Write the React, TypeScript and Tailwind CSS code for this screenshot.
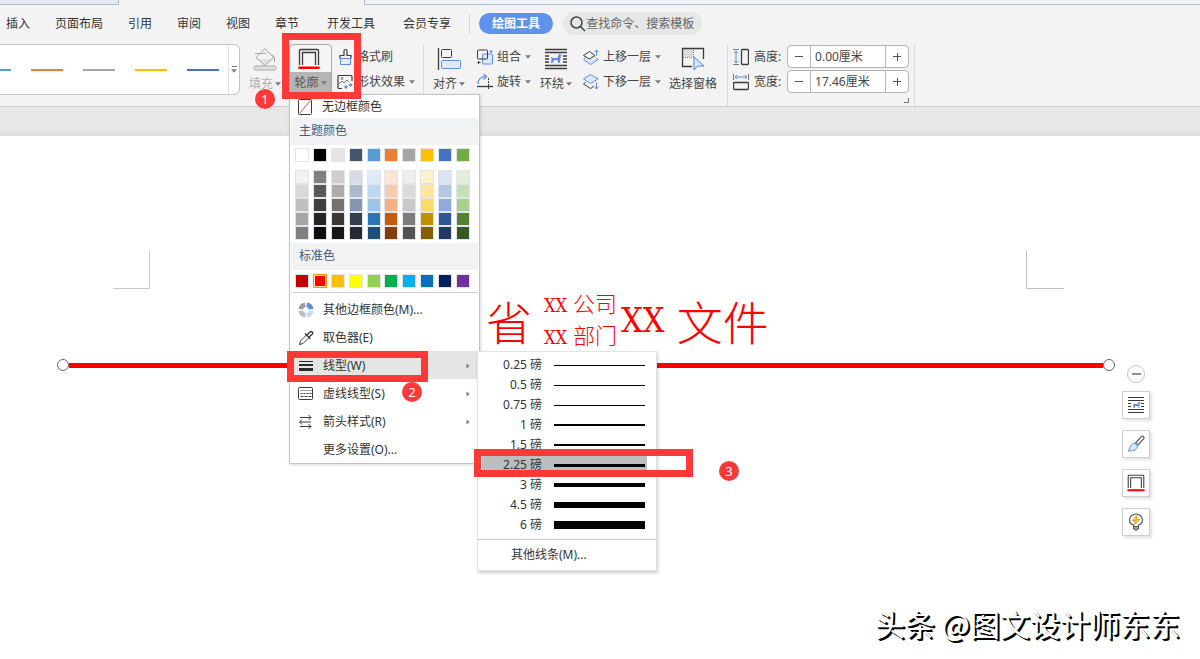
import React from 'react';

const tabs = ['插入', '页面布局', '引用', '审阅', '视图', '章节'];
const moreTabs = ['开发工具', '会员专享'];

const galleryColors = ['#5b9bd5', '#ed7d31', '#a5a5a5', '#ffc000', '#4472c4'];

const themeColors = ['#ffffff', '#000000', '#e7e6e6', '#44546a', '#5b9bd5', '#ed7d31', '#a5a5a5', '#ffc000', '#4472c4', '#70ad47'];

const themeTints = [
  ['#f2f2f2', '#d9d9d9', '#bfbfbf', '#a6a6a6', '#808080'],
  ['#808080', '#595959', '#404040', '#262626', '#0d0d0d'],
  ['#d0cece', '#afabab', '#767171', '#3b3838', '#181717'],
  ['#d6dce5', '#adb9ca', '#8497b0', '#333f50', '#222a35'],
  ['#deebf7', '#bdd7ee', '#9dc3e6', '#2e75b6', '#1f4e79'],
  ['#fbe5d6', '#f8cbad', '#f4b183', '#c55a11', '#843c0c'],
  ['#ededed', '#dbdbdb', '#c9c9c9', '#7c7c7c', '#525252'],
  ['#fff2cc', '#ffe699', '#ffd966', '#bf9000', '#806000'],
  ['#dae3f3', '#b4c7e7', '#8faadc', '#2f5597', '#203864'],
  ['#e2f0d9', '#c5e0b4', '#a9d18e', '#548235', '#385723'],
];

const standardColors = ['#c00000', '#ff0000', '#ffc000', '#ffff00', '#92d050', '#00b050', '#00b0f0', '#0070c0', '#002060', '#7030a0'];

const weights = [
  { label: '0.25 磅', size: 1 },
  { label: '0.5 磅', size: 1 },
  { label: '0.75 磅', size: 1 },
  { label: '1 磅', size: 2 },
  { label: '1.5 磅', size: 2 },
  { label: '2.25 磅', size: 3, active: true },
  { label: '3 磅', size: 4 },
  { label: '4.5 磅', size: 6 },
  { label: '6 磅', size: 8 },
];

function Caret() {
  return (
    <svg width="6" height="4" viewBox="0 0 6 4" className="shrink-0">
      <path d="M0 0.300h6L3 3.700z" fill="#7c7c7c" />
    </svg>
  );
}

function FillIcon() {
  return (
    <svg width="24" height="24" viewBox="0 0 24 24" fill="none" stroke="#a6a6a6">
      <path d="M4 12h16l-8 7z" fill="#e2e2e2" stroke="none" />
      <path d="M12 1.500L20.500 10.500L12 18.500L3 10.500z" />
      <path d="M2 6.500h11M19 8l2.500 2v5" />
      <rect x="1" y="19" width="22" height="4" rx="1.500" fill="#e2e2e2" />
    </svg>
  );
}

function OutlineIcon({ size }: { size: number }) {
  return (
    <svg width={size} height={size} viewBox="0 0 22 22" fill="none">
      <path d="M1.500 17V2.500a1 1 0 0 1 1-1H19.500a1 1 0 0 1 1 1V17" stroke="#3b3b3b" strokeWidth="1.300" />
      <path d="M4.500 17V4.500H17.500V17" stroke="#3b3b3b" strokeWidth="1.300" />
      <path d="M1.500 19.800H20.500" stroke="#ff0000" strokeWidth="2.600" strokeLinecap="round" />
    </svg>
  );
}

function FormatIcon() {
  return (
    <svg width="16" height="18" viewBox="0 0 16 18" fill="none">
      <path d="M3.500 10.500h10v6h-10z" fill="#e4ecfa" stroke="#5b8de0" />
      <path d="M3 10.500V7.500h4V3a1.500 1.500 0 0 1 3 0v4.500h4v3" stroke="#3b3b3b" strokeWidth="1.200" />
    </svg>
  );
}

function EffectIcon() {
  return (
    <svg width="16" height="16" viewBox="0 0 16 16" fill="none">
      <path d="M5 14.500H2a1 1 0 0 1-1-1V2.500a1 1 0 0 1 1-1h12a1 1 0 0 1 1 1V7" stroke="#3b3b3b" strokeWidth="1.200" />
      <path d="M2 10l3-3 2 2 3-3 2 2" stroke="#777" />
      <circle cx="5" cy="4.500" r="1" stroke="#777" />
      <path d="M9 11l2 2-2 2-2-2zM13.500 9l2 2-2 2-2-2z" fill="#5b8de0" />
    </svg>
  );
}

function AlignIcon() {
  return (
    <svg width="24" height="24" viewBox="0 0 24 24" fill="none">
      <path d="M1.500 1v22" stroke="#3b3b3b" strokeWidth="1.300" />
      <rect x="4.500" y="2.500" width="10" height="8" rx="1" stroke="#3b3b3b" />
      <rect x="4.500" y="13.500" width="19" height="8" rx="1" fill="#dfe9fa" stroke="#5b8de0" />
    </svg>
  );
}

function GroupIcon() {
  return (
    <svg width="16" height="16" viewBox="0 0 16 16" fill="none">
      <rect x="5.500" y="5" width="10" height="10" rx="1" fill="#dfe9fa" stroke="#5b8de0" />
      <rect x="0.500" y="1" width="10" height="9" rx="1" stroke="#3b3b3b" />
      <path d="M1.500 12v3M0.500 13.500h3" stroke="#3b3b3b" />
      <path d="M14 1v3M12.500 2.500h3" stroke="#5b8de0" />
    </svg>
  );
}

function RotateIcon() {
  return (
    <svg width="16" height="16" viewBox="0 0 16 16" fill="none">
      <path d="M1 10C1 5 4 2.500 9 2.500M6.500 0L9.500 2.500L6.500 5.500" stroke="#5b8de0" strokeWidth="1.200" />
      <path d="M0 12.500h16" stroke="#3b3b3b" strokeWidth="1.300" />
      <path d="M11.500 4v12" stroke="#3b3b3b" strokeDasharray="2 1" />
    </svg>
  );
}

function WrapIcon({ size }: { size: number }) {
  return (
    <svg width={size} height={size} viewBox="0 0 24 24" fill="none">
      <path d="M1 2.500h22M1 5.500h22M1 9h4M19 9h4M1 12h4M19 12h4M1 15h4M19 15h4M1 18.500h22M1 21.500h22" stroke="#3b3b3b" strokeWidth="1.400" />
      <path d="M7 10l1.500 1h5L15 7l3 1-1.500 1.500V12l-1 4h-1.500l-.5-3h-3L8.500 16H7l.5-3.500z" fill="#5b8de0" />
    </svg>
  );
}

function LayerIcon({ down }: { down?: boolean }) {
  return (
    <svg width="16" height="16" viewBox="0 0 16 16" fill="none">
      {down ? (
        <>
          <path d="M7.500 0.500L15 5L7.500 9.500L0.500 5z" fill="#dfe9fa" stroke="#5b8de0" />
          <path d="M2.500 8L0.500 10L7.500 14.500L11 12" stroke="#3b3b3b" />
          <path d="M13.500 8.500v6.500M11.500 13l2 2 2-2" stroke="#5b8de0" />
        </>
      ) : (
        <>
          <path d="M2.500 8.500L0.500 10.500L7.500 15.500L15 10.500L13 8.500" fill="#dfe9fa" stroke="#5b8de0" />
          <path d="M6.500 2.500L12 6.500L6.500 10L0.500 6.500z" fill="#f3f3f3" stroke="#3b3b3b" />
          <path d="M13.500 7V1M11.500 3l2-2 2 2" stroke="#5b8de0" />
        </>
      )}
    </svg>
  );
}

function SelectPaneIcon() {
  return (
    <svg width="24" height="24" viewBox="0 0 24 24" fill="none">
      <path d="M2 2h10v8H2z" fill="#dcdcdc" />
      <path d="M11 19.500H1.500v-18h21V12" stroke="#3b3b3b" strokeWidth="1.300" />
      <path d="M12.500 3v7M2 10.500h10" stroke="#777" strokeDasharray="1 1" />
      <path d="M13 10v13l3.500-4H23z" fill="#dfe9fa" stroke="#4a83e0" />
    </svg>
  );
}

function HeightIcon() {
  return (
    <svg width="16" height="18" viewBox="0 0 16 18" fill="none">
      <path d="M0 1.500h6M0 16.500h6" stroke="#777" />
      <path d="M3 3v12M1 5l2-2 2 2M1 13l2 2 2-2" stroke="#5b8de0" />
      <rect x="8.500" y="1.500" width="7" height="15" rx="1" stroke="#3b3b3b" strokeWidth="1.300" />
    </svg>
  );
}

function WidthIcon() {
  return (
    <svg width="16" height="18" viewBox="0 0 16 18" fill="none">
      <path d="M0.500 1v6M15.500 1v6" stroke="#777" />
      <path d="M2 4h12M4 2L2 4l2 2M12 2l2 2-2 2" stroke="#5b8de0" />
      <rect x="0.500" y="9.500" width="15" height="7" rx="1" stroke="#3b3b3b" strokeWidth="1.300" />
    </svg>
  );
}

function BigButton({ icon, label, caret = true, className = '' }: { icon: React.ReactNode; label: string; caret?: boolean; className?: string }) {
  return (
    <button className={`flex shrink-0 flex-col items-center ${className}`}>
      <span className="flex h-[29px] items-center justify-center">{icon}</span>
      <span className="flex h-[22px] items-center gap-[2px] whitespace-nowrap">
        {label}
        {caret && <Caret />}
      </span>
    </button>
  );
}

function SmallButton({ icon, label, caret = true }: { icon: React.ReactNode; label: string; caret?: boolean }) {
  return (
    <button className="flex h-[25px] items-center gap-1 whitespace-nowrap">
      {icon}
      <span>{label}</span>
      {caret && <Caret />}
    </button>
  );
}

function Divider() {
  return <span className="h-[62px] w-px shrink-0 bg-[#dcdcdc]" />;
}

function Spinner({ id, label, value, icon }: { id: string; label: string; value: string; icon: React.ReactNode }) {
  return (
    <div className="flex h-[25px] items-center gap-[5px]">
      {icon}
      <label htmlFor={id} className="w-7 whitespace-nowrap">{label}</label>
      <div className="flex h-[23px] w-[122px] overflow-hidden rounded border border-[#b5b5b5] bg-white">
        <button aria-label="减少" className="flex w-[22px] items-center justify-center">
          <span className="h-px w-2 bg-[#555]" />
        </button>
        <input id={id} defaultValue={value} className="w-0 min-w-0 flex-1 border-x border-[#b5b5b5] px-1 text-[#444] outline-none" />
        <button aria-label="增加" className="relative flex w-[22px] items-center justify-center">
          <span className="h-px w-2 bg-[#555]" />
          <span className="absolute h-2 w-px bg-[#555]" />
        </button>
      </div>
    </div>
  );
}

function Swatch({ color, active }: { color: string; active?: boolean }) {
  return (
    <button
      aria-label={color}
      className={`block h-[14px] w-[14px] border ${active ? 'border-[#ff9900] ring-1 ring-inset ring-[#ffe0a0]' : 'border-[#e2e4e7]'}`}
      style={{ backgroundColor: color }}
    />
  );
}

function MenuItem({ icon, label, arrow, active }: { icon?: React.ReactNode; label: string; arrow?: boolean; active?: boolean }) {
  return (
    <button className={`flex h-7 w-full items-center pt-px pr-[9px] pl-2 ${active ? 'bg-[#e5e5e5]' : ''}`}>
      <span className="flex w-[25px] shrink-0">{icon}</span>
      <span className="flex-1 text-left">{label}</span>
      {arrow && (
        <svg width="4" height="6" viewBox="0 0 4 6">
          <path d="M0.500 0.500L3.500 3L0.500 5.500z" fill="#777" />
        </svg>
      )}
    </button>
  );
}

function WeightMenu() {
  return (
    <div className="absolute top-[256px] left-[187px] w-[180px] border border-[#e2e2e2] bg-white pt-[3px] shadow-[1px_2px_3px_rgba(0,0,0,0.2)]">
      {weights.map((w) => (
        <button key={w.label} className={`ml-1 flex h-5 w-[165px] items-center ${w.active ? 'bg-[#bdbdbd]' : ''}`}>
          <span className="w-[60px] text-right">{w.label}</span>
          <span className="ml-3 w-[91px] bg-black" style={{ height: w.size }} />
        </button>
      ))}
      <div className="mt-1 h-px bg-[#c8c8c8]" />
      <button className="h-[30px] w-full pl-[33px] text-left">其他线条(M)...</button>
    </div>
  );
}

function OutlineMenu() {
  return (
    <div className="absolute top-[50px] left-0 z-20 w-[191px] border border-[#c3c3c3] bg-white text-[#333] shadow-[1px_1px_3px_rgba(0,0,0,0.15)]">
      <button className="flex h-[23px] w-full items-center gap-[9px] pl-2">
        <svg width="15" height="16" viewBox="0 0 15 16" fill="none">
          <rect x="0.500" y="0.500" width="13" height="15" rx="1" stroke="#3b3b3b" />
          <path d="M1.500 14.500L12.500 1.500" stroke="#d94a4a" />
        </svg>
        无边框颜色
      </button>
      <div className="mx-px flex h-[27px] items-center bg-[#f0f2f4] pb-[2px] pl-2 text-[#44597c]">主题颜色</div>
      <div className="flex justify-between pt-[3px] pr-[9px] pl-[5px]">
        {themeColors.map((c) => (
          <Swatch key={c} color={c} />
        ))}
      </div>
      <div className="flex justify-between pt-2 pr-[9px] pb-[3px] pl-[5px]">
        {themeTints.map((col, i) => (
          <div key={i}>
            {col.map((c) => (
              <Swatch key={c} color={c} />
            ))}
          </div>
        ))}
      </div>
      <div className="mx-px flex h-[27px] items-center bg-[#f0f2f4] pb-[2px] pl-2 text-[#44597c]">标准色</div>
      <div className="flex justify-between pt-1 pr-[9px] pb-1 pl-[5px]">
        {standardColors.map((c) => (
          <Swatch key={c} color={c} active={c === '#ff0000'} />
        ))}
      </div>
      <div className="mx-px mb-[2px] h-px bg-[#d0d0d0]" />
      <MenuItem
        label="其他边框颜色(M)..."
        icon={
          <svg width="16" height="16" viewBox="0 0 16 16" fill="none" strokeWidth="4.500">
            <path d="M8.700 2.800A5.300 5.300 0 0 1 13.200 7.300" stroke="#5b8de0" />
            <path d="M13.200 8.700A5.300 5.300 0 0 1 8.700 13.200" stroke="#c4d8f8" />
            <path d="M7.300 13.200A5.300 5.300 0 0 1 2.800 8.700" stroke="#b8bcc2" />
            <path d="M2.800 7.300A5.300 5.300 0 0 1 7.300 2.800" stroke="#9a9da3" />
          </svg>
        }
      />
      <MenuItem
        label="取色器(E)"
        icon={
          <svg width="16" height="16" viewBox="0 0 16 16" fill="none" stroke="#3b3b3b">
            <path d="M8.500 5L2.500 11L1.500 14.500L5 13.500L11 7.500" />
            <path d="M7 3.500L12.500 9M9 5L12 2a1.500 1.500 0 0 1 2.200 2.200L11 7" strokeWidth="1.400" />
          </svg>
        }
      />
      <MenuItem
        label="线型(W)"
        arrow
        active
        icon={
          <svg width="16" height="14" viewBox="0 0 16 14" stroke="#2b2b2b">
            <path d="M1 2.500h14" />
            <path d="M1 6h14" strokeWidth="2" />
            <path d="M1 10.500h14" strokeWidth="3" />
          </svg>
        }
      />
      <MenuItem
        label="虚线线型(S)"
        arrow
        icon={
          <svg width="16" height="14" viewBox="0 0 16 14" fill="none" stroke="#3b3b3b">
            <rect x="0.500" y="0.500" width="14" height="12" rx="1" />
            <path d="M2.500 3.500h11" strokeDasharray="1 1" />
            <path d="M2.500 6.500h11" strokeDasharray="2 1" />
            <path d="M2.500 9.500h11" strokeDasharray="3 1" />
          </svg>
        }
      />
      <MenuItem
        label="箭头样式(R)"
        arrow
        icon={
          <svg width="16" height="16" viewBox="0 0 16 16" fill="none" stroke="#3b3b3b">
            <path d="M2 3.500h11M10.500 1l2.500 2.500L10.500 6M2 8h11M4 5.500L1.500 8L4 10.500M2 12.500h11M10.500 10l2.500 2.500-2.500 2.500" />
          </svg>
        }
      />
      <MenuItem label="更多设置(O)..." />
      <WeightMenu />
    </div>
  );
}

function Ribbon() {
  return (
    <div className="flex h-[65px] border-b border-[#cfcfcf] pt-[2px] text-[#444]">
      <div className="flex h-[51px] w-[240px] shrink-0 items-center rounded-r-md border border-l-0 border-[#c4c4c4] bg-white">
        <div className="flex w-[228px] gap-5 overflow-hidden pr-[11px]">
          {galleryColors.map((c, i) => (
            <button key={c} aria-label={c} className={`flex h-10 shrink-0 items-center ${i === 0 ? 'w-[11px]' : 'w-8'}`}>
              <span className="h-[2px] w-full" style={{ backgroundColor: c }} />
            </button>
          ))}
        </div>
        <button aria-label="更多样式" className="flex h-full flex-1 flex-col items-center justify-center gap-[2px] border-l border-[#e0e0e0]">
          <span className="h-px w-[5px] bg-[#777]" />
          <Caret />
        </button>
      </div>
      <BigButton icon={<FillIcon />} label="填充" className="ml-[9px] w-8 text-[#b0b0b0]" />
      <div className="relative ml-2 shrink-0">
        <button className="flex w-[43px] flex-col overflow-hidden rounded-t border border-[#a9a9a9] bg-[#f5f5f5]">
          <span className="flex h-[27px] items-center justify-center pr-[3px]">
            <OutlineIcon size={22} />
          </span>
          <span className="flex h-[22px] items-center justify-center gap-[2px] bg-[#b5b5b5] text-[#555]">
            轮廓
            <Caret />
          </span>
        </button>
        <OutlineMenu />
      </div>
      <div className="ml-[5px] flex flex-col">
        <SmallButton icon={<FormatIcon />} label="格式刷" caret={false} />
        <SmallButton icon={<EffectIcon />} label="形状效果" />
      </div>
      <span className="ml-2 flex">
        <Divider />
      </span>
      <BigButton icon={<AlignIcon />} label="对齐" className="ml-[9px] w-8" />
      <div className="ml-3 flex flex-col">
        <SmallButton icon={<GroupIcon />} label="组合" />
        <SmallButton icon={<RotateIcon />} label="旋转" />
      </div>
      <BigButton icon={<WrapIcon size={24} />} label="环绕" className="ml-[9px] w-8" />
      <div className="ml-[11px] flex flex-col">
        <SmallButton icon={<LayerIcon />} label="上移一层" />
        <SmallButton icon={<LayerIcon down />} label="下移一层" />
      </div>
      <BigButton icon={<SelectPaneIcon />} label="选择窗格" caret={false} className="ml-2 w-12" />
      <span className="ml-[10px] flex">
        <Divider />
      </span>
      <div className="ml-[5px] flex flex-col">
        <Spinner id="shape-height" label="高度:" value="0.00厘米" icon={<HeightIcon />} />
        <Spinner id="shape-width" label="宽度:" value="17.46厘米" icon={<WidthIcon />} />
        <span className="mt-1 h-[5px] w-[5px] self-end border-r border-b border-[#777]" />
      </div>
      <span className="ml-[5px] flex">
        <Divider />
      </span>
    </div>
  );
}

function SideTools() {
  const box = 'flex h-7 w-7 items-center justify-center border border-[#cfcfcf] bg-white shadow-[2px_2px_3px_rgba(0,0,0,0.12)]';
  return (
    <div className="absolute top-[229px] right-[50px] flex flex-col items-center gap-[11px]">
      <button aria-label="收起" className="-mb-[3px] flex h-[18px] w-[18px] items-center justify-center rounded-full border border-[#c4c4c4] bg-white">
        <span className="h-[2px] w-[9px] bg-[#909090]" />
      </button>
      <button aria-label="环绕" className={box}>
        <svg width="16" height="16" viewBox="0 0 16 16" fill="none">
          <path d="M0 0.500h16M0 3.500h16M0 6.500h3M13 6.500h3M0 9.500h3M13 9.500h3M0 12.500h16M0 15.500h16" stroke="#3b3b3b" />
          <path d="M5 7h4.500L11 5l2 .5L11.500 7v4h-1V9H7v2H5.500V8.500z" fill="#5b8de0" />
        </svg>
      </button>
      <button aria-label="样式" className={box}>
        <svg width="18" height="18" viewBox="0 0 18 18" fill="none">
          <path d="M8.500 8L14.300 1.600a1.600 1.600 0 0 1 2.300 2.200L11 10z" fill="#fff" stroke="#555" strokeWidth="1.200" />
          <path d="M7.500 8l3 3c-1 3-2 5-9.500 5 2-2 2.500-7 6.500-8z" fill="#dfe9fa" stroke="#5b8de0" />
          <path d="M8.500 7l3 3.500" stroke="#5b8de0" />
        </svg>
      </button>
      <button aria-label="轮廓" className={box}>
        <OutlineIcon size={18} />
      </button>
      <button aria-label="灵感" className={box}>
        <svg width="16" height="18" viewBox="0 0 16 18" fill="none">
          <path d="M5.500 13.500v-1.500C3.500 11.500 1.500 9.500 1.500 7a6.500 6 0 0 1 13 0c0 2.500-2 4.500-4 5v1.500z" stroke="#555" strokeWidth="1.200" />
          <path d="M5.500 13.500h5v2.500h-1.500v1h-2v-1H5.500z" fill="#aaa" stroke="#555" />
          <path d="M9 2.500L4 7.500h3L6.500 11.500L12 6.500H9z" fill="#ffc928" stroke="#e8892c" strokeWidth="0.800" />
        </svg>
      </button>
    </div>
  );
}

function Page() {
  return (
    <main className="relative flex-1 bg-white pt-[115px]">
      <div className="flex h-[38px] justify-between pr-[136px] pl-[113px]">
        <span className="w-[37px] border-r border-b border-[#c8c8c8]" />
        <span className="w-[38px] border-b border-l border-[#c0c0c0]" />
      </div>
      <h1 className="mt-[6px] flex h-[50px] items-center pl-[486px] font-['Noto_Sans_CJK_SC',sans-serif] font-light whitespace-nowrap text-[#ff0000]">
        <span className="text-[46px] leading-[50px]">省</span>
        <span className="ml-3 flex flex-col text-[22px] leading-[29px]">
          <span className="flex items-baseline gap-[6px]">
            <span className="font-['DejaVu_Serif_Condensed','Liberation_Serif',serif] text-[18px]">XX</span>公司
          </span>
          <span className="flex items-baseline gap-[6px]">
            <span className="font-['DejaVu_Serif_Condensed','Liberation_Serif',serif] text-[18px]">XX</span>部门
          </span>
        </span>
        <span className="ml-1 font-['DejaVu_Serif_Condensed','Liberation_Serif',serif] text-[34px] leading-[50px]">XX</span>
        <span className="ml-3 text-[46px] leading-[50px]">文件</span>
      </h1>
      <div className="mt-[14px] mr-[85px] ml-[57px] flex items-center">
        <span className="h-3 w-3 rounded-full border border-[#666] bg-white" />
        <span className="h-[5px] flex-1 bg-[#ff0000]" />
        <span className="h-3 w-3 rounded-full border border-[#666] bg-white" />
      </div>
      <SideTools />
      <p className="absolute right-[20px] bottom-[13px] font-['Noto_Sans_CJK_SC',sans-serif] text-[30px] leading-[46px] whitespace-nowrap text-white [text-shadow:1px_1px_0_#000,2px_2px_0_#000]">头条 @图文设计师东东</p>
    </main>
  );
}

function Step({ n, className }: { n: number; className: string }) {
  return (
    <span className={`absolute z-30 flex h-5 w-5 items-center justify-center rounded-full bg-[#ff3838] text-[13px] text-white ${className}`}>{n}</span>
  );
}

export default function App() {
  return (
    <div className="relative flex min-h-screen flex-col overflow-hidden bg-[#f3f3f3] font-['Noto_Sans','Noto_Sans_CJK_SC',sans-serif] text-[12px] leading-[18px]">
      <div className="flex h-[5px] justify-between">
        <span className="w-[119px] border-r border-b border-[#b4bed0] bg-[#e4e8f2]" />
        <span className="ml-[245px] flex-1 border-b border-l border-[#b4bed0] bg-[#eff2f8]" />
      </div>
      <nav className="flex h-[37px] items-center pl-[6px] text-[#333]">
        <div className="flex gap-[25px] whitespace-nowrap">
          {tabs.map((t) => (
            <button key={t}>{t}</button>
          ))}
        </div>
        <div className="ml-7 flex gap-7 whitespace-nowrap">
          {moreTabs.map((t) => (
            <button key={t}>{t}</button>
          ))}
        </div>
        <span className="ml-[18px] h-5 w-px bg-[#d5d5d5]" />
        <button className="ml-[9px] h-[21px] w-[74px] rounded-full bg-[#5f92ea] font-bold text-white">绘图工具</button>
        <label htmlFor="search" className="ml-[10px] flex h-[23px] w-[139px] items-center rounded-full bg-[#e5e7e9] pl-[7px]">
          <svg width="16" height="16" viewBox="0 0 16 16" fill="none" stroke="#444" strokeWidth="1.500">
            <circle cx="6.500" cy="6.500" r="5.500" />
            <path d="M10.500 10.500L15 15" />
          </svg>
          <input id="search" aria-label="查找命令" placeholder="查找命令、搜索模板" className="w-0 min-w-0 flex-1 bg-transparent outline-none placeholder:text-[#666]" />
        </label>
      </nav>
      <Ribbon />
      <div className="h-[29px] bg-gradient-to-b from-[#e7e7e7] from-80% to-[#dcdcdc]" />
      <Page />

      <span className="absolute top-[33px] left-[282px] z-30 h-[66px] w-[79px] border-[7px] border-[#ff3838]" />
      <span className="absolute top-[351px] left-[287px] z-30 h-[31px] w-[141px] border-[7px] border-[#ff3838]" />
      <span className="absolute top-[449px] left-[474px] z-30 h-[28px] w-[219px] border-[7px] border-[#ff3838]" />
      <Step n={1} className="top-[89px] left-[255px]" />
      <Step n={2} className="top-[382px] left-[402px]" />
      <Step n={3} className="top-[461px] left-[719px]" />
    </div>
  );
}
